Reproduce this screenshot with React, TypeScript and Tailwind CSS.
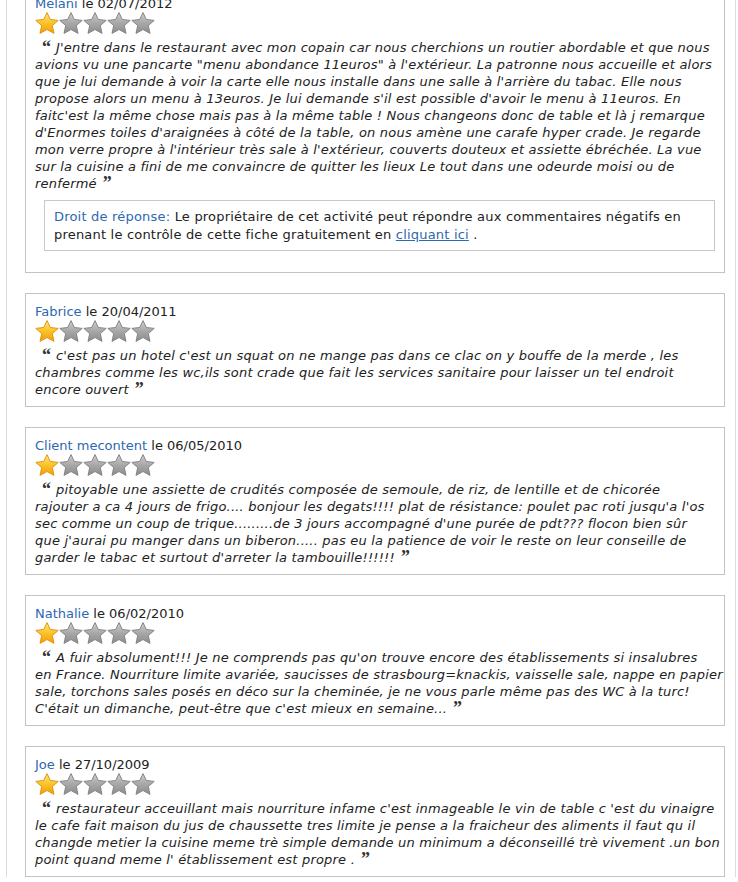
import React from "react";

type Review = {
  author: string;
  date: string;
  lines: string[];
  reply?: boolean;
};

const reviews: Review[] = [
  {
    author: "Melani",
    date: "02/07/2012",
    reply: true,
    lines: [
      "J'entre dans le restaurant avec mon copain car nous cherchions un routier abordable et que nous",
      "avions vu une pancarte \"menu abondance 11euros\" à l'extérieur. La patronne nous accueille et alors",
      "que je lui demande à voir la carte elle nous installe dans une salle à l'arrière du tabac. Elle nous",
      "propose alors un menu à 13euros. Je lui demande s'il est possible d'avoir le menu à 11euros. En",
      "faitc'est la même chose mais pas à la même table ! Nous changeons donc de table et là j remarque",
      "d'Enormes toiles d'araignées à côté de la table, on nous amène une carafe hyper crade. Je regarde",
      "mon verre propre à l'intérieur très sale à l'extérieur, couverts douteux et assiette ébréchée. La vue",
      "sur la cuisine a fini de me convaincre de quitter les lieux Le tout dans une odeurde moisi ou de",
      "renfermé",
    ],
  },
  {
    author: "Fabrice",
    date: "20/04/2011",
    lines: [
      "c'est pas un hotel c'est un squat on ne mange pas dans ce clac on y bouffe de la merde , les",
      "chambres comme les wc,ils sont crade que fait les services sanitaire pour laisser un tel endroit",
      "encore ouvert",
    ],
  },
  {
    author: "Client mecontent",
    date: "06/05/2010",
    lines: [
      "pitoyable une assiette de crudités composée de semoule, de riz, de lentille et de chicorée",
      "rajouter a ca 4 jours de frigo.... bonjour les degats!!!! plat de résistance: poulet pac roti jusqu'a l'os",
      "sec comme un coup de trique.........de 3 jours accompagné d'une purée de pdt??? flocon bien sûr",
      "que j'aurai pu manger dans un biberon..... pas eu la patience de voir le reste on leur conseille de",
      "garder le tabac et surtout d'arreter la tambouille!!!!!!",
    ],
  },
  {
    author: "Nathalie",
    date: "06/02/2010",
    lines: [
      "A fuir absolument!!! Je ne comprends pas qu'on trouve encore des établissements si insalubres",
      "en France. Nourriture limite avariée, saucisses de strasbourg=knackis, vaisselle sale, nappe en papier",
      "sale, torchons sales posés en déco sur la cheminée, je ne vous parle même pas des WC à la turc!",
      "C'était un dimanche, peut-être que c'est mieux en semaine...",
    ],
  },
  {
    author: "Joe",
    date: "27/10/2009",
    lines: [
      "restaurateur acceuillant mais nourriture infame c'est inmageable le vin de table c 'est du vinaigre",
      "le cafe fait maison du jus de chaussette tres limite je pense a la fraicheur des aliments il faut qu il",
      "changde metier la cuisine meme trè simple demande un minimum a déconseillé trè vivement .un bon",
      "point quand meme l' établissement est propre .",
    ],
  },
];

const STAR =
  "M12 0.6 L15.3 7.5 L23.2 8.4 L17.3 13.6 L19 21.4 L12 17.5 L5 21.4 L6.7 13.6 L0.8 8.4 L8.7 7.5 Z";

function Star({ on, id }: { on: boolean; id: string }) {
  return (
    <svg width="24" height="22" viewBox="0 0 24 22" className="block">
      <defs>
        <linearGradient id={id} x1="0" y1="0" x2="0" y2="1">
          {on ? (
            <>
              <stop offset="0" stopColor="#ffe88a" />
              <stop offset="0.5" stopColor="#fbc327" />
              <stop offset="1" stopColor="#f29c0e" />
            </>
          ) : (
            <>
              <stop offset="0" stopColor="#cfcfcf" />
              <stop offset="0.5" stopColor="#a8a8a8" />
              <stop offset="1" stopColor="#8c8c8c" />
            </>
          )}
        </linearGradient>
      </defs>
      <path
        d={STAR}
        fill={`url(#${id})`}
        stroke={on ? "#e0960f" : "#858585"}
        strokeWidth="1"
        strokeLinejoin="round"
      />
    </svg>
  );
}

function Stars({ idx }: { idx: number }) {
  return (
    <div className="flex h-[22px] mb-[5px]">
      {[0, 1, 2, 3, 4].map((i) => (
        <Star key={i} on={i === 0} id={`st-${idx}-${i}`} />
      ))}
    </div>
  );
}

// big bold quote glyph, kept inside the 17px line box
function Quote({ open }: { open?: boolean }) {
  return (
    <span
      className={`inline-block align-top h-[17px] leading-[17px] text-[18px] font-bold not-italic tracking-normal text-[#333] font-['Liberation_Serif',serif] ${
        open ? "ml-[7px] mr-[5px]" : "ml-[6px]"
      }`}
    >
      {open ? "“" : "”"}
    </span>
  );
}

function ReviewCard({ r, idx }: { r: Review; idx: number }) {
  return (
    <div className="border border-[#c3c3c3] bg-white pt-[9px] pb-[8px] pl-[9px] pr-[9px] mb-5">
      <div className="leading-[17px] text-[#222]">
        <span className="text-[#2d68b0]">{r.author}</span> le {r.date}
      </div>
      <Stars idx={idx} />
      <div className="italic leading-[17px] text-[#222] whitespace-nowrap tracking-[0.2px]">
        {r.lines.map((l, i) => (
          <div key={i} className="h-[17px]">
            {i === 0 && <Quote open />}
            {l}
            {i === r.lines.length - 1 && <Quote />}
          </div>
        ))}
      </div>
      {r.reply && (
        <div className="ml-[9px] mt-2 mb-[13px] border border-[#c8c8c8] pl-[9px] pr-2 pt-[7px] pb-[6px] leading-[18px] text-[#222] tracking-[0.2px]">
          <span className="text-[#2d68b0]">Droit de réponse:</span> Le propriétaire de cet activité
          peut répondre aux commentaires négatifs en prenant le contrôle de cette fiche gratuitement
          en{" "}
          <a href="#" className="text-[#2d68b0] underline">
            cliquant ici
          </a>{" "}
          .
        </div>
      )}
    </div>
  );
}

export default function App() {
  return (
    <div className="bg-white min-h-screen h-[882px] overflow-hidden font-['DejaVu_Sans',Verdana,sans-serif] text-[13px]">
      <div className="ml-[6px] w-[730px] border-x border-[#dcdcdc] pl-[18px] pr-[10px] -mt-[15px]">
        {reviews.map((r, i) => (
          <ReviewCard key={i} r={r} idx={i} />
        ))}
      </div>
    </div>
  );
}
